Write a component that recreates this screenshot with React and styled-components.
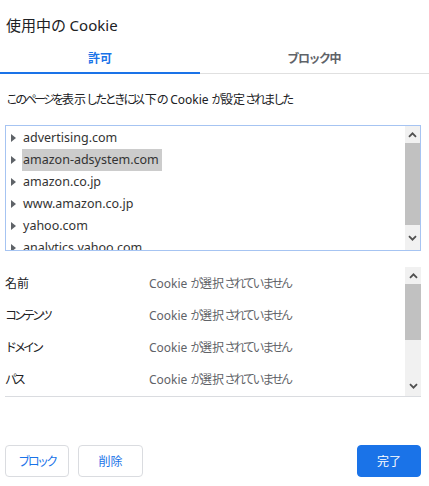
import React from 'react';
import styled, { createGlobalStyle } from 'styled-components';

const GlobalStyle = createGlobalStyle`
  html, body {
    margin: 0;
    padding: 0;
    background: #fff;
  }
  body {
    font-family: 'Noto Sans', 'Noto Sans CJK JP', sans-serif;
    font-size: 13px;
    color: #202124;
  }
`;

const Kana = styled.span`
  letter-spacing: ${p => p.$ls || '-0.2em'};
`;

const JText = ({ children, ls }) => {
  const parts = String(children).split(/([\u3040-\u30ff]+)/);
  return parts.map((part, i) =>
    /[\u3040-\u30ff]/.test(part) ? (
      <Kana key={i} $ls={ls}>{part}</Kana>
    ) : (
      <React.Fragment key={i}>{part}</React.Fragment>
    )
  );
};

const Dialog = styled.div`
  width: 429px;
  height: 486px;
  display: flex;
  flex-direction: column;
  overflow: hidden;
`;

const Title = styled.h1`
  margin: 0;
  padding: 14px 6px 8px;
  font-size: 15px;
  font-weight: 400;
  line-height: 22px;
  color: #202124;
`;

const TabBar = styled.div`
  display: grid;
  grid-template-columns: 200px 1fr;
  border-bottom: 1px solid #e0e0e0;
`;

const Tab = styled.div`
  height: 28px;
  display: flex;
  align-items: center;
  justify-content: center;
  font-size: 12px;
  font-weight: 700;
  color: ${p => (p.$active ? '#1a73e8' : '#5f6368')};
  border-bottom: 2px solid ${p => (p.$active ? '#1a73e8' : 'transparent')};
  margin-bottom: -1px;
`;

const Description = styled.p`
  margin: 16px 0 15px;
  padding: 0 6px;
  line-height: 20px;
  font-size: 12px;
`;

const Word = styled.span`
  margin: 0 3px 0 4px;
`;

const TreeBox = styled.div`
  margin: 0 8px 0 5px;
  height: 124px;
  border: 1px solid #a6c4f2;
  display: flex;
  overflow: hidden;
`;

const TreeList = styled.div`
  flex: 1;
  padding-top: 1px;
  overflow: hidden;
`;

const TreeRow = styled.div`
  height: 22px;
  display: flex;
  align-items: center;
  padding-left: 5px;
`;

const Arrow = styled.span`
  width: 0;
  height: 0;
  border-top: 4px solid transparent;
  border-bottom: 4px solid transparent;
  border-left: 5px solid #5f6368;
  margin-right: 6px;
`;

const Host = styled.span`
  height: 22px;
  line-height: 22px;
  padding: 0 3px 0 1px;
  font-size: 12.5px;
  color: #333;
  background: ${p => (p.$selected ? '#cccccc' : 'transparent')};
`;

const Scrollbar = styled.div`
  width: ${p => p.$w}px;
  display: flex;
  flex-direction: column;
  background: #f1f1f1;
`;

const ScrollButton = styled.div`
  height: ${p => p.$h}px;
  display: flex;
  align-items: center;
  justify-content: center;
  flex-shrink: 0;
`;

const Track = styled.div`
  flex: 1;
  display: flex;
  flex-direction: column;
`;

const Thumb = styled.div`
  height: ${p => p.$h}px;
  background: #c1c1c1;
`;

const Chevron = ({ down }) => (
  <svg width="9" height="6" viewBox="0 0 9 6">
    <path
      d={down ? 'M1 1.2 L4.5 4.7 L8 1.2' : 'M1 4.8 L4.5 1.3 L8 4.8'}
      fill="none"
      stroke="#505050"
      strokeWidth="1.8"
    />
  </svg>
);

const ScrollBar = ({ width, upH, thumbH, downH }) => (
  <Scrollbar $w={width}>
    <ScrollButton $h={upH}>
      <Chevron />
    </ScrollButton>
    <Track>
      <Thumb $h={thumbH} />
    </Track>
    <ScrollButton $h={downH}>
      <Chevron down />
    </ScrollButton>
  </Scrollbar>
);

const Details = styled.div`
  margin: 16px 8px 0 5px;
  height: 129px;
  border-bottom: 1px solid #dadce0;
  display: flex;
  overflow: hidden;
`;

const DetailTable = styled.div`
  flex: 1;
`;

const DetailRow = styled.div`
  height: 32px;
  display: grid;
  grid-template-columns: 144px 1fr;
  align-items: center;
  font-size: 12px;
`;

const Label = styled.span`
  color: #202124;
`;

const Value = styled.span`
  color: #5f6368;
`;

const Footer = styled.div`
  margin-top: 48px;
  padding: 0 8px 0 5px;
  display: flex;
  gap: 9px;
`;

const Button = styled.button`
  height: 32px;
  width: ${p => p.$w}px;
  border-radius: 4px;
  border: 1px solid ${p => (p.$primary ? '#1a73e8' : '#dadce0')};
  background: ${p => (p.$primary ? '#1a73e8' : '#fff')};
  color: ${p => (p.$primary ? '#fff' : '#1a73e8')};
  font-family: inherit;
  font-size: 12px;
  font-weight: 400;
  padding: 0;
  cursor: pointer;
  margin-left: ${p => (p.$push ? 'auto' : '0')};
`;

const hosts = [
  'advertising.com',
  'amazon-adsystem.com',
  'amazon.co.jp',
  'www.amazon.co.jp',
  'yahoo.com',
  'analytics.yahoo.com',
];

const fields = ['名前', 'コンテンツ', 'ドメイン', 'パス'];

const App = () => (
  <Dialog>
    <GlobalStyle />
    <Title>
      <JText ls="-0.02em">使用中の Cookie</JText>
    </Title>
    <TabBar>
      <Tab $active>許可</Tab>
      <Tab>
        <JText ls="-0.12em">ブロック中</JText>
      </Tab>
    </TabBar>
    <Description>
      <JText ls="-0.22em">このページを表示したときに以下の</JText>
      <Word>Cookie</Word>
      <JText ls="-0.22em">が設定されました</JText>
    </Description>
    <TreeBox>
      <TreeList>
        {hosts.map((h, i) => (
          <TreeRow key={h}>
            <Arrow />
            <Host $selected={i === 1}>{h}</Host>
          </TreeRow>
        ))}
      </TreeList>
      <ScrollBar width={15} upH={17} thumbH={82} downH={24} />
    </TreeBox>
    <Details>
      <DetailTable>
        {fields.map(f => (
          <DetailRow key={f}>
            <Label>
              <JText ls="-0.25em">{f}</JText>
            </Label>
            <Value>
              Cookie <JText ls="-0.2em">が選択されていません</JText>
            </Value>
          </DetailRow>
        ))}
      </DetailTable>
      <ScrollBar width={16} upH={17} thumbH={56} downH={20} />
    </Details>
    <Footer>
      <Button $w={64}>
        <JText ls="-0.22em">ブロック</JText>
      </Button>
      <Button $w={65}>削除</Button>
      <Button $w={64} $primary $push>完了</Button>
    </Footer>
  </Dialog>
);

export default App;
